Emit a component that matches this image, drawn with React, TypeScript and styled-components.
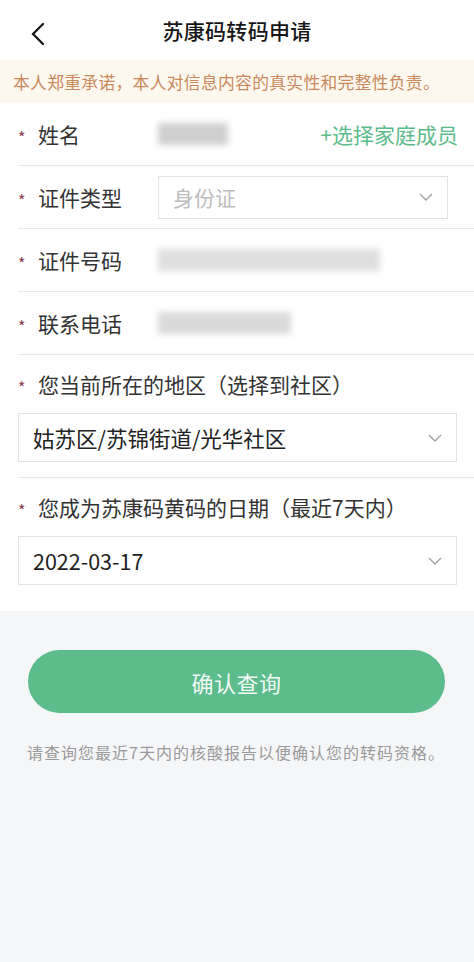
import React from 'react'
import styled, { createGlobalStyle } from 'styled-components'

const GlobalStyle = createGlobalStyle`
    body {
        margin: 0;
        background: #ffffff;
        font-family: "Noto Sans CJK SC", "Noto Sans", sans-serif;
    }
`

const Page = styled.div`
    width: 474px;
    min-height: 962px;
    display: flex;
    flex-direction: column;
    background: #ffffff;
`

const Header = styled.div`
    height: 60px;
    display: flex;
    align-items: center;
    justify-content: center;
    position: relative;
`

const BackButton = styled.button`
    position: absolute;
    left: 24px;
    top: 18px;
    width: 28px;
    height: 32px;
    padding: 0;
    border: none;
    background: none;
    display: flex;
    align-items: center;
    justify-content: center;
`

const Title = styled.h1`
    margin: 0;
    font-size: 21px;
    font-weight: 500;
    color: #161616;
    letter-spacing: 0.3px;
`

const Notice = styled.div`
    height: 43px;
    display: flex;
    align-items: center;
    padding-left: 13px;
    background: #fdf8ee;
    color: #c8895d;
    font-size: 16.8px;
    letter-spacing: 0.3px;
`

const Form = styled.div`
    padding-left: 18px;
    display: flex;
    flex-direction: column;
`

const InlineRow = styled.div`
    height: 62px;
    display: flex;
    align-items: center;
    padding-right: 16px;
    border-bottom: 1px solid #e8e8e8;
`

const BlockRow = styled.div<{ $last?: boolean }>`
    display: flex;
    flex-direction: column;
    padding: 16px 16px ${(p) => (p.$last ? '26px' : '15px')} 0;
    border-bottom: ${(p) => (p.$last ? 'none' : '1px solid #e8e8e8')};
`

const LabelLine = styled.div`
    display: flex;
    align-items: center;
    height: 26px;
    margin-bottom: 16px;
`

const Star = styled.span`
    width: 20px;
    color: #8c3b50;
    font-size: 16px;
    line-height: 1;
    padding-top: 6px;
`

const Label = styled.span<{ $fixed?: boolean }>`
    ${(p) => (p.$fixed ? 'width: 120px;' : '')}
    font-size: 21px;
    color: #333333;
`

const Blur = styled.div<{ $w: number; $tone: string }>`
    width: ${(p) => p.$w}px;
    height: 22px;
    background: ${(p) => p.$tone};
    filter: blur(3px);
    opacity: 0.55;
`

const FamilyLink = styled.span`
    margin-left: auto;
    font-size: 21px;
    color: #5dbb8b;
`

const Select = styled.div<{ $inline?: boolean }>`
    box-sizing: border-box;
    width: ${(p) => (p.$inline ? '290px' : '439px')};
    height: ${(p) => (p.$inline ? '43px' : '49px')};
    border: 1px solid #e2e2e2;
    display: flex;
    align-items: center;
    justify-content: space-between;
    padding: 0 14px 0 14px;
`

const SelectText = styled.span<{ $placeholder?: boolean }>`
    font-size: ${(p) => (p.$placeholder ? '21px' : '21.5px')};
    color: ${(p) => (p.$placeholder ? '#bdbdbd' : '#222222')};
`

const Footer = styled.div`
    flex: 1;
    background: #f5f6f8;
    padding: 39px 28px 0 28px;
    display: flex;
    flex-direction: column;
`

const SubmitButton = styled.button`
    width: 417px;
    height: 63px;
    border: none;
    border-radius: 32px;
    background: #5cbc8b;
    color: #f2fbf6;
    font-family: inherit;
    font-size: 22px;
    letter-spacing: 0.5px;
`

const Hint = styled.p`
    margin: 27px 0 0 -1px;
    font-size: 16px;
    letter-spacing: 1px;
    color: #9a9a9a;
`

const Chevron = () => (
    <svg width="14" height="8" viewBox="0 0 14 8" fill="none">
        <path d="M1 1 L7 7 L13 1" stroke="#a0a0a0" strokeWidth="1.4" />
    </svg>
)

const BackIcon = () => (
    <svg width="16" height="24" viewBox="0 0 16 24" fill="none">
        <path d="M13 2 L3 12 L13 22" stroke="#111111" strokeWidth="2.2" strokeLinecap="round" />
    </svg>
)

export default function App() {
    return (
        <Page>
            <GlobalStyle />
            <Header>
                <BackButton>
                    <BackIcon />
                </BackButton>
                <Title>苏康码转码申请</Title>
            </Header>
            <Notice>本人郑重承诺，本人对信息内容的真实性和完整性负责。</Notice>

            <Form>
                <InlineRow>
                    <Star>*</Star>
                    <Label $fixed>姓名</Label>
                    <Blur $w={70} $tone="#a8a8a8" />
                    <FamilyLink>+选择家庭成员</FamilyLink>
                </InlineRow>
                <InlineRow>
                    <Star>*</Star>
                    <Label $fixed>证件类型</Label>
                    <Select $inline>
                        <SelectText $placeholder>身份证</SelectText>
                        <Chevron />
                    </Select>
                </InlineRow>
                <InlineRow>
                    <Star>*</Star>
                    <Label $fixed>证件号码</Label>
                    <Blur $w={222} $tone="#c4c4c4" />
                </InlineRow>
                <InlineRow>
                    <Star>*</Star>
                    <Label $fixed>联系电话</Label>
                    <Blur $w={133} $tone="#bcbcbc" />
                </InlineRow>

                <BlockRow>
                    <LabelLine>
                        <Star>*</Star>
                        <Label>您当前所在的地区（选择到社区）</Label>
                    </LabelLine>
                    <Select>
                        <SelectText>姑苏区/苏锦街道/光华社区</SelectText>
                        <Chevron />
                    </Select>
                </BlockRow>
                <BlockRow $last>
                    <LabelLine>
                        <Star>*</Star>
                        <Label>您成为苏康码黄码的日期（最近7天内）</Label>
                    </LabelLine>
                    <Select>
                        <SelectText>2022-03-17</SelectText>
                        <Chevron />
                    </Select>
                </BlockRow>
            </Form>

            <Footer>
                <SubmitButton>确认查询</SubmitButton>
                <Hint>请查询您最近7天内的核酸报告以便确认您的转码资格。</Hint>
            </Footer>
        </Page>
    )
}
